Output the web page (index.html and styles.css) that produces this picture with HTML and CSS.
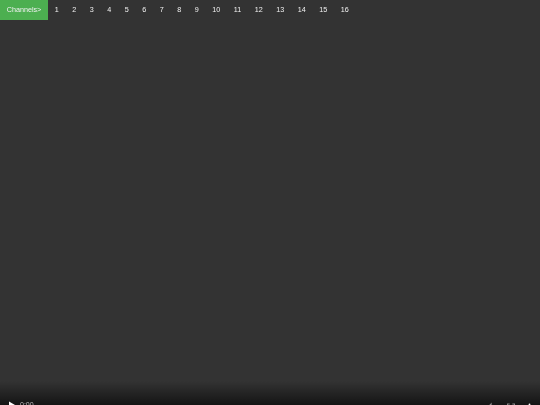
FILE: index.html
```html
<!DOCTYPE html>
<html lang="en">
<head>
<meta charset="utf-8">
<title>Channels</title>
<link rel="stylesheet" href="styles.css">
</head>
<body>
<nav class="nav">
  <a class="nav-head">Channels&gt;</a>
  <a class="nav-item">1</a><a class="nav-item">2</a><a class="nav-item">3</a><a class="nav-item">4</a>
  <a class="nav-item">5</a><a class="nav-item">6</a><a class="nav-item">7</a><a class="nav-item">8</a>
  <a class="nav-item">9</a><a class="nav-item">10</a><a class="nav-item">11</a><a class="nav-item">12</a>
  <a class="nav-item">13</a><a class="nav-item">14</a><a class="nav-item">15</a><a class="nav-item">16</a>
</nav>
<main class="stage"></main>
<div class="controls">
  <svg class="play" viewBox="0 0 10 12"><path d="M0 0v12l10-6z"/></svg>
  <span class="time">0:00</span>
  <svg class="vol" viewBox="0 0 12 12"><path d="M0 4h3l4-4v12l-4-4H0z"/><path d="M8.500 3.500a3.500 3.500 0 0 1 0 5z"/></svg>
  <svg class="full" viewBox="0 0 12 12"><path d="M0 0h4v1.500H1.500V4H0zM8 0h4v4h-1.500V1.500H8z"/></svg>
  <svg class="more" viewBox="0 0 4 14"><circle cx="2" cy="2" r="1.300"/><circle cx="2" cy="7" r="1.300"/><circle cx="2" cy="12" r="1.300"/></svg>
</div>
</body>
</html>
```
FILE: styles.css
```css
* { box-sizing: border-box; }
html, body { margin: 0; height: 405px; overflow: hidden; }
body {
  background: #333333;
  font-family: "Liberation Sans", Arial, sans-serif;
  display: flex;
  flex-direction: column;
  position: relative;
}
.nav { display: flex; height: 20px; align-items: stretch; flex: none; filter: blur(0.25px); }
.nav-head {
  width: 48px;
  background: #4caf50;
  color: #f2f2f2;
  font-size: 7.200px;
  line-height: 20px;
  text-align: center;
}
.nav-item {
  color: #f2f2f2;
  font-size: 7.200px;
  line-height: 20px;
  padding: 0 6.750px;
}
.stage { flex: 1; }
.controls {
  position: absolute;
  left: 0;
  right: 0;
  bottom: 0;
  height: 24px;
  background: linear-gradient(to bottom, rgba(0,0,0,0), rgba(0,0,0,0.6));
  padding: 20px 9px 0;
  display: flex;
  align-items: flex-start;
  color: #fff;
  overflow: hidden;
}
.controls svg { fill: #fff; flex: none; filter: blur(0.25px); }
.play { width: 6px; height: 8px; }
.time { font-size: 7px; line-height: 8px; color: #bbb; margin-left: 5px; filter: blur(0.3px); }
.vol { width: 8px; height: 9px; margin-left: auto; margin-top: 1px; opacity: .5; }
.full { width: 8px; height: 9px; margin-left: 12px; margin-top: 2px; opacity: .5; }
.more { width: 3px; height: 10px; margin-left: 13px; margin-top: 2px; }
```
